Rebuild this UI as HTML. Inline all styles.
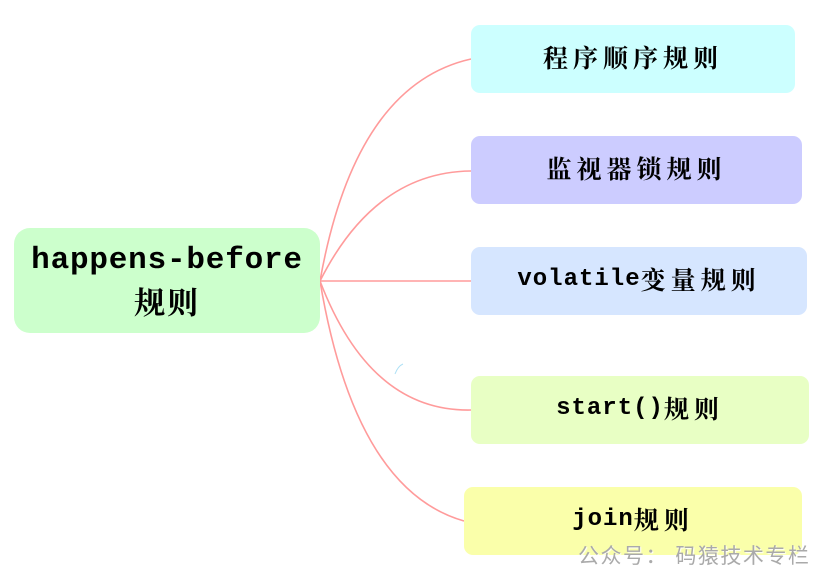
<!DOCTYPE html>
<html><head><meta charset="utf-8"><style>
body{margin:0;width:825px;height:578px;background:#fff;position:relative;overflow:hidden}
.b{position:absolute;border-radius:9px;display:flex;align-items:center;justify-content:center;font-family:"Liberation Mono","Noto Serif CJK SC",monospace;font-weight:bold;font-size:24px;letter-spacing:1px;color:#000;padding-bottom:4px;box-sizing:border-box}
.c{font-family:"Noto Serif CJK SC",serif;font-size:25px;letter-spacing:5px}
svg{position:absolute;left:0;top:0}
</style></head><body>
<svg width="825" height="578"><g fill="none" stroke="#ff9b9b" stroke-width="1.6">
<path d="M320,281 Q355,85 471,59"/>
<path d="M320,281 Q375,172 471,171"/>
<path d="M320,281 L471,281"/>
<path d="M320,281 Q370,412 471,410"/>
<path d="M320,281 Q355,490 464,521"/>
</g><path d="M395,374 Q398,366 403,364" stroke="#aee0f5" fill="none" stroke-width="1"/></svg>
<div class="b" style="left:14px;top:228px;width:306px;height:105px;background:#ccffcc;border-radius:16px;flex-direction:column;font-size:31px;letter-spacing:0.8px;line-height:40px;text-align:center;padding:0"><div>happens-before</div><div class="c" style="font-size:31px;letter-spacing:2px">规则</div></div>
<div class="b" style="left:471px;top:25px;width:324px;height:68px;background:#ccffff"><span class="c">程序顺序规则</span></div>
<div class="b" style="left:471px;top:136px;width:331px;height:68px;background:#ccccff"><span class="c">监视器锁规则</span></div>
<div class="b" style="left:471px;top:247px;width:336px;height:68px;background:#d6e6ff">volatile<span class="c">变量规则</span></div>
<div class="b" style="left:471px;top:376px;width:338px;height:68px;background:#e8ffc4">start()<span class="c">规则</span></div>
<div class="b" style="left:464px;top:487px;width:338px;height:68px;background:#faffaa">join<span class="c">规则</span></div>
<div style="position:absolute;left:578px;top:540px;font-family:'Liberation Sans','Noto Sans CJK SC',sans-serif;font-size:21px;color:#aaa;letter-spacing:1.5px;text-shadow:1px 1px 1px #fff">公众号： 码猿技术专栏</div>
</body></html>
